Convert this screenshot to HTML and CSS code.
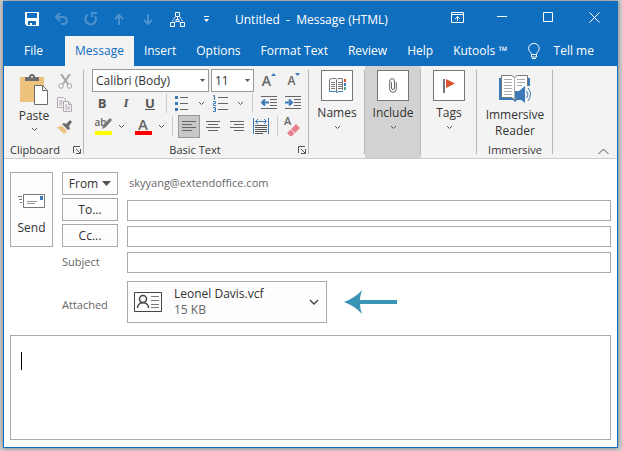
FILE: index.html
```html
<!DOCTYPE html>
<html lang="en">
<head>
<meta charset="UTF-8">
<meta name="viewport" content="width=device-width, initial-scale=1.0">
<title>Untitled - Message (HTML)</title>
<link rel="stylesheet" href="styles.css">
</head>
<body>
  <div class="window">
    <header class="titlebar">
      <div class="quick-access">
        <button type="button" aria-label="Save">
          <svg width="15" height="15" viewBox="0 0 15 15"><path fill="#fff" fill-rule="evenodd" d="M0 0h14v14H2l-2-2zM2 1v5h10V1zM3 9v4h2v-2h2v2h4V9z"/></svg>
        </button>
        <button type="button" class="faded" aria-label="Undo">
          <svg width="15" height="14" viewBox="0 0 15 14" class="line"><path stroke-width="2" d="M6 1L2 5l4 4M2 5h7c5 0 5 7 0 7H7"/></svg>
        </button>
        <button type="button" class="faded" aria-label="Redo">
          <svg width="14" height="14" viewBox="0 0 14 14" class="line"><path stroke-width="2" d="M4 2.500A5.300 5.300 0 1 0 11 4M8 5V1h5"/></svg>
        </button>
        <button type="button" class="faded" aria-label="Previous item">
          <svg width="11" height="13" viewBox="0 0 11 13" class="line"><path stroke-width="2" d="M5 12V2M1 6l4-4 4 4"/></svg>
        </button>
        <button type="button" class="faded" aria-label="Next item">
          <svg width="11" height="13" viewBox="0 0 11 13" class="line"><path stroke-width="2" d="M5 1v10M1 7l4 4 4-4"/></svg>
        </button>
        <button type="button" aria-label="Check names">
          <svg width="16" height="15" viewBox="0 0 16 15" class="line"><path d="M5.500.5h4v4h-4zM.5 10.500h4v4h-4zM10.500 10.500h4v4h-4zM6 7.500h3v2H6z"/><path stroke-dasharray="2 1" d="M5 5l-3 5M10 5l3 5M7.500 5v3M4 11l3-2M11 11L8 9"/></svg>
        </button>
        <button type="button" aria-label="Customize toolbar">
          <svg width="7" height="7" viewBox="0 0 7 7"><path fill="#fff" d="M1 0h5v1H1zM1 3h5L3.500 6z"/></svg>
        </button>
      </div>
      <div class="window-title">Untitled &nbsp;-&nbsp; Message (HTML)</div>
      <div class="window-controls">
        <button type="button" aria-label="Ribbon display options">
          <svg width="13" height="11" viewBox="0 0 13 11" class="line"><path d="M.5.5h12v10H.5zM0 2.500h13M6.500 9V4.500M4 7l2.500-2.500L9 7"/></svg>
        </button>
        <button type="button" aria-label="Minimize">
          <svg width="11" height="11" viewBox="0 0 11 11" class="line"><path d="M0 4.500h10"/></svg>
        </button>
        <button type="button" aria-label="Maximize">
          <svg width="10" height="10" viewBox="0 0 10 10" class="line"><path d="M.5.5h9v9h-9z"/></svg>
        </button>
        <button type="button" aria-label="Close">
          <svg width="11" height="11" viewBox="0 0 11 11" class="line"><path d="M.5.5l10 10M10.500.5l-10 10"/></svg>
        </button>
      </div>
    </header>

    <nav class="tabs">
      <a href="#file">File</a>
      <a href="#message" class="active">Message</a>
      <a href="#insert">Insert</a>
      <a href="#options">Options</a>
      <a href="#format">Format Text</a>
      <a href="#review">Review</a>
      <a href="#help">Help</a>
      <a href="#kutools">Kutools ™</a>
      <a href="#tellme" class="tell-me">
        <svg width="12" height="17" viewBox="0 0 12 17" class="line"><path d="M3.500 11.500C3.500 9 .6 8.500.6 5.500a5.200 5 0 0 1 10.600 0c0 3-2.700 3.500-2.700 6zM3.500 12v2h5v-2M4 15.500h4"/></svg>
        Tell me
      </a>
    </nav>

    <div class="ribbon">
      <section class="group clipboard">
        <div class="clipboard-tools">
          <button type="button" class="paste">
            <svg width="29" height="31" viewBox="0 0 29 31"><path fill="#ecc27c" d="M0 3h24v25H0z"/><path fill="#6d6d6d" d="M5 3h4a3 3 0 0 1 6 0h4v4H5z"/><circle cx="12" cy="3" r="1" fill="#f2f2f2"/><path fill="#fff" stroke="#6d6d6d" d="M14.500 11.500h8l5 5v14h-13z"/><path fill="none" stroke="#6d6d6d" d="M22.500 11.500v5h5"/></svg>
            <span>Paste</span>
            <svg class="chevron" width="7" height="5" viewBox="0 0 7 5"><path d="M1 1l2.500 2.500L6 1"/></svg>
          </button>
          <div class="clipboard-side">
            <button type="button" aria-label="Cut">
              <svg width="15" height="15" viewBox="0 0 15 15" fill="none" stroke="#a5a5a5"><path stroke-width="2" d="M3 0l7 10M12 0L5 10"/><circle cx="3" cy="12" r="2.300"/><circle cx="11.500" cy="12" r="2.300"/></svg>
            </button>
            <button type="button" aria-label="Copy">
              <svg width="16" height="15" viewBox="0 0 16 15" fill="#f5f2f5" stroke="#b3abb3"><path d="M.5.5h6l2 2v8h-8zM2 4h4M2 6h4M2 8h3"/><path d="M6.500 4.500h5l3 3v7h-8zM11.500 4.500v3h3M8 8h2M8 10h5M8 12h5"/></svg>
            </button>
            <button type="button" aria-label="Format painter">
              <svg width="16" height="14" viewBox="0 0 16 14"><path fill="#ecc27c" d="M0 7l5-1 5 5-3 3z"/><path fill="#6d6d6d" d="M5 4l2-1 2 1 4-4 2 2-3 4 1 3-2 1z"/></svg>
            </button>
          </div>
        </div>
        <div class="group-label">
          <span>Clipboard</span>
          <button type="button" class="launcher" aria-label="Clipboard settings">
            <svg width="8" height="8" viewBox="0 0 8 8"><path d="M.5 7V.5H7M3 3l4 4M7.500 3v4.500H3"/></svg>
          </button>
        </div>
      </section>

      <section class="group basic-text">
        <div class="text-row">
          <div class="picker font-picker">
            <select aria-label="Font"><option>Calibri (Body)</option></select>
            <svg width="5" height="3" viewBox="0 0 5 3"><path fill="#555" d="M0 0h5L2.500 3z"/></svg>
          </div>
          <div class="picker size-picker">
            <select aria-label="Font size"><option>11</option></select>
            <svg width="5" height="3" viewBox="0 0 5 3"><path fill="#555" d="M0 0h5L2.500 3z"/></svg>
          </div>
          <button type="button" class="grow" aria-label="Grow font">A<svg width="5" height="3" viewBox="0 0 5 3"><path fill="#3b79b7" d="M0 3h5L2.500 0z"/></svg></button>
          <button type="button" class="shrink" aria-label="Shrink font">A<svg width="5" height="3" viewBox="0 0 5 3"><path fill="#3b79b7" d="M0 0h5L2.500 3z"/></svg></button>
        </div>

        <div class="text-row style-row">
          <button type="button" class="letter bold">B</button>
          <button type="button" class="letter italic">I</button>
          <button type="button" class="letter underline">U</button>
          <i class="divider"></i>
          <button type="button" class="with-menu" aria-label="Bullets">
            <svg width="14" height="15" viewBox="0 0 14 15"><path fill="#3b79b7" d="M0 0h3v3H0zM0 6h3v3H0zM0 12h3v3H0z"/><path stroke="#666" d="M5 1.500h8M5 7.500h8M5 13.500h8"/></svg>
            <svg class="chevron" width="7" height="5" viewBox="0 0 7 5"><path d="M1 1l2.500 2.500L6 1"/></svg>
          </button>
          <button type="button" class="with-menu" aria-label="Numbering">
            <svg width="15" height="17" viewBox="0 0 15 17" fill="none"><path stroke="#3b79b7" d="M0 1l1.500-.5V5M0 6.500h2.500v2h-2v2H3M0 12.500h2.500v4H0M1 14.500h1"/><path stroke="#666" d="M5 2.500h10M5 8.500h10M5 14.500h10"/></svg>
            <svg class="chevron" width="7" height="5" viewBox="0 0 7 5"><path d="M1 1l2.500 2.500L6 1"/></svg>
          </button>
          <i class="divider"></i>
          <button type="button" aria-label="Decrease indent">
            <svg width="16" height="14" viewBox="0 0 16 14" fill="none"><path stroke="#666" d="M0 .5h16M9 3.500h7M9 6.500h7M9 9.500h7M0 12.500h16"/><path stroke="#3b79b7" stroke-width="2" d="M8 6.500H1M4 3.500l-3 3 3 3"/></svg>
          </button>
          <button type="button" aria-label="Increase indent">
            <svg width="16" height="14" viewBox="0 0 16 14" fill="none"><path stroke="#666" d="M0 .5h16M9 3.500h7M9 6.500h7M9 9.500h7M0 12.500h16"/><path stroke="#3b79b7" stroke-width="2" d="M0 6.500h7M4 3.500l3 3-3 3"/></svg>
          </button>
        </div>

        <div class="text-row color-row">
          <button type="button" class="with-menu" aria-label="Highlight color">
            <span class="swatch highlight">ab<svg width="11" height="12" viewBox="0 0 11 12"><path fill="#777" d="M9 0l2 2-6 7-4 2 1-4z"/></svg></span>
            <svg class="chevron" width="7" height="5" viewBox="0 0 7 5"><path d="M1 1l2.500 2.500L6 1"/></svg>
          </button>
          <button type="button" class="with-menu" aria-label="Font color">
            <span class="swatch font-color">A</span>
            <svg class="chevron" width="7" height="5" viewBox="0 0 7 5"><path d="M1 1l2.500 2.500L6 1"/></svg>
          </button>
          <i class="divider"></i>
          <div class="align-buttons">
            <button type="button" class="align pressed" aria-label="Align left" aria-pressed="true">
              <svg width="14" height="11" viewBox="0 0 14 11"><path stroke="#666" d="M0 .5h14M0 3.500h10M0 6.500h14M0 9.500h10"/></svg>
            </button>
            <button type="button" class="align" aria-label="Center">
              <svg width="14" height="11" viewBox="0 0 14 11"><path stroke="#666" d="M0 .5h14M2 3.500h10M0 6.500h14M2 9.500h10"/></svg>
            </button>
            <button type="button" class="align" aria-label="Align right">
              <svg width="14" height="11" viewBox="0 0 14 11"><path stroke="#666" d="M0 .5h14M4 3.500h10M0 6.500h14M4 9.500h10"/></svg>
            </button>
            <button type="button" class="align" aria-label="Justify">
              <svg width="16" height="16" viewBox="0 0 16 16" fill="none"><path stroke="#3b79b7" d="M.5 0v16M15.500 0v16M3 3.500h10M5 1L2.500 3.500 5 6M11 1l2.500 2.500L11 6"/><path stroke="#555" d="M2 7.500h12M2 9.500h12M2 11.500h12M2 13.500h12M2 15.500h8"/></svg>
            </button>
          </div>
          <i class="divider"></i>
          <button type="button" class="clear" aria-label="Clear formatting">
            <span>A</span>
            <svg width="14" height="12" viewBox="0 0 14 12"><path fill="#e8808f" d="M9 0l4 4-5 5-4-4zM3.500 5.500l4 4L5 12H3L0 9z"/></svg>
          </button>
        </div>

        <div class="group-label">
          <span>Basic Text</span>
          <button type="button" class="launcher" aria-label="Font settings">
            <svg width="8" height="8" viewBox="0 0 8 8"><path d="M.5 7V.5H7M3 3l4 4M7.500 3v4.500H3"/></svg>
          </button>
        </div>
      </section>

      <section class="group compact">
        <button type="button" class="large">
          <span class="frame"><svg width="17" height="15" viewBox="0 0 17 15" fill="none"><path fill="#fff" stroke="#3b79b7" d="M.5 2v11.500h6l1.500 1 1.500-1H14"/><path stroke="#777" d="M.5 12V1.500L3 .5h4l1 1 1-1h4.500V12M7.500 2v12M2 4.500h4M2 6.500h4M2 8.500h4M2 10.500h4M9 4.500h4M9 6.500h4M9 8.500h4M9 10.500h4"/><path fill="#d9542f" d="M15 1h2v3h-2z"/><path fill="#3b79b7" d="M15 5h2v3h-2z"/><path fill="#4ba68a" d="M15 9h2v3h-2z"/></svg></span>
          <span>Names</span>
          <svg class="chevron" width="7" height="5" viewBox="0 0 7 5"><path d="M1 1l2.500 2.500L6 1"/></svg>
        </button>
      </section>

      <section class="group compact selected">
        <button type="button" class="large">
          <span class="frame"><svg width="8" height="15" viewBox="0 0 8 15" fill="none" stroke="#666"><path d="M2.500 4v6a1.500 1.500 0 0 0 3 0V3A2.300 2.300 0 0 0 .7 3v8a3.300 3.300 0 0 0 6.600 0V4"/></svg></span>
          <span>Include</span>
          <svg class="chevron" width="7" height="5" viewBox="0 0 7 5"><path d="M1 1l2.500 2.500L6 1"/></svg>
        </button>
      </section>

      <section class="group compact">
        <button type="button" class="large">
          <span class="frame"><svg width="12" height="14" viewBox="0 0 12 14"><path fill="#777" d="M0 0h2v14H0z"/><path fill="#d9542f" d="M3 0l9 4.500L3 9z"/></svg></span>
          <span>Tags</span>
          <svg class="chevron" width="7" height="5" viewBox="0 0 7 5"><path d="M1 1l2.500 2.500L6 1"/></svg>
        </button>
      </section>

      <section class="group immersive">
        <button type="button" class="large">
          <svg width="33" height="29" viewBox="0 0 33 29" fill="none"><path fill="#3b79b7" d="M0 3h31v22H18l-2 2-2-2H0z"/><path fill="#fff" stroke="#777" d="M2.500.5h10l3 2 3-2h10v22h-10l-3 2-3-2h-10z"/><path stroke="#aaa" d="M15.500 2v22M5 4.500h8M5 7.500h8M5 10.500h8M5 13.500h8M5 16.500h8M5 19.500h8M18 4.500h8M18 7.500h8M18 10.500h5"/><path fill="#f3f3f3" d="M24 11h9v18h-9z"/><path fill="#3b79b7" d="M16 16h4l6-5v17l-6-5h-4z"/><path stroke="#3b79b7" d="M27.500 16q3 4 0 7M29 13q5 6 0 13"/></svg>
          <span>Immersive<br>Reader</span>
        </button>
        <div class="group-label">Immersive</div>
      </section>

      <button type="button" class="collapse" aria-label="Collapse ribbon">
        <svg class="chevron" width="11" height="7" viewBox="0 0 11 7"><path d="M.5 6l5-5 5 5"/></svg>
      </button>
    </div>

    <form class="compose">
      <button type="button" class="box-button send">
        <svg width="28" height="15" viewBox="0 0 28 15" fill="none"><path fill="#fff" stroke="#777" d="M5.500.5h21v13h-21z"/><path fill="#3b79b7" d="M22 2h3v4h-3z"/><path stroke="#999" d="M9 7.500h10M9 9.500h8"/><path stroke="#777" d="M0 2.500h4M1 5.500h3M2 8.500h2"/></svg>
        <span>Send</span>
      </button>
      <button type="button" class="box-button">From
        <svg width="9" height="5" viewBox="0 0 9 5"><path fill="#555" d="M0 0h9L4.500 5z"/></svg>
      </button>
      <span class="sender">skyyang@extendoffice.com</span>
      <button type="button" class="box-button">To...</button>
      <input type="text" aria-label="To">
      <button type="button" class="box-button">Cc...</button>
      <input type="text" aria-label="Cc">
      <label class="field-label" for="subject">Subject</label>
      <input type="text" id="subject">
      <span class="field-label attached-label">Attached</span>
      <div class="attachments">
        <button type="button" class="attachment">
          <svg width="28" height="20" viewBox="0 0 28 20" fill="none" stroke="#444"><path d="M.5.5h27v19H.5z"/><circle cx="9" cy="7" r="3.500" stroke-width="1.500"/><path stroke-width="1.500" d="M3.500 16c0-7 11-7 11 0"/><path stroke="#777" d="M17 4.500h8M17 8.500h8M17 12.500h8M17 15.500h8"/></svg>
          <span class="file"><span>Leonel Davis.vcf</span><span class="file-size">15 KB</span></span>
          <svg width="10" height="7" viewBox="0 0 10 7" fill="none" stroke="#444"><path stroke-width="1.500" d="M1 1l4 4 4-4"/></svg>
        </button>
        <svg width="53" height="24" viewBox="0 0 53 24"><path fill="#3a94b5" d="M0 12Q11 8 18 0q-2 6-2 10h37v4H16q0 4 2 10-7-8-18-12z"/></svg>
      </div>
    </form>

    <div class="message">
      <textarea aria-label="Message body"></textarea>
      <span class="caret"></span>
    </div>
  </div>
</body>
</html>
```

FILE: styles.css
```css
* {
  box-sizing: border-box;
}

body {
  margin: 0;
  padding: 1px 4px 3px 3px;
  min-height: 100vh;
  display: flex;
  background-color: #d0d0d0;
  font-family: "Open Sans", "Noto Sans", sans-serif;
  font-size: 12px;
  line-height: 16px;
  color: #333;
}

button,
input,
select,
textarea {
  font: inherit;
  color: inherit;
}

button {
  margin: 0;
  padding: 0;
  border: 0;
  background: none;
  display: flex;
  align-items: center;
  justify-content: center;
}

svg {
  display: block;
  flex: none;
}

.line {
  fill: none;
  stroke: #fff;
}

.chevron {
  fill: none;
  stroke: #555;
}

.window {
  flex: 1;
  display: flex;
  flex-direction: column;
  background-color: #fff;
  border: 1px solid #106ebe;
  box-shadow: 0 0 5px #777;
}

/* title bar and tabs */

.titlebar {
  display: flex;
  height: 34px;
  background-color: #106ebe;
  color: #fff;
}

.quick-access {
  display: flex;
  padding-left: 14px;
}

.quick-access button {
  width: 29px;
}

.quick-access .faded {
  opacity: 0.25;
}

.window-title {
  flex: 1;
  padding-left: 14px;
  line-height: 36px;
  white-space: nowrap;
}

.window-controls {
  display: flex;
  padding-bottom: 4px;
}

.window-controls button {
  width: 46px;
}

.window-controls button:first-child {
  width: 44px;
}

.tabs {
  display: flex;
  height: 30px;
  padding-left: 10px;
  background-color: #106ebe;
}

.tabs a {
  padding: 0 10px;
  line-height: 30px;
  color: #fff;
  text-decoration: none;
  white-space: nowrap;
}

.tabs a:first-child {
  padding-right: 22px;
}

.tabs .active {
  background-color: #f3f3f3;
  color: #106ebe;
}

.tabs .tell-me {
  display: flex;
  align-items: center;
  gap: 14px;
}

/* ribbon */

.ribbon {
  display: flex;
  height: 93px;
  background-color: #f3f3f3;
  border-bottom: 1px solid #ccc;
}

.group {
  position: relative;
  display: flex;
  flex-direction: column;
  padding-top: 4px;
}

.group::after {
  content: "";
  position: absolute;
  top: 4px;
  right: 0;
  bottom: 4px;
  width: 1px;
  background-color: #b5b5b5;
}

.group-label {
  display: flex;
  align-items: center;
  justify-content: center;
  margin-top: auto;
  font-size: 11px;
}

.launcher svg {
  fill: none;
  stroke: #555;
}

.clipboard {
  width: 80px;
}

.clipboard-tools {
  display: flex;
  align-items: flex-start;
  padding: 4px 0 0 14px;
  gap: 7px;
}

.paste {
  width: 32px;
  flex-direction: column;
  gap: 3px;
}

.clipboard-side {
  display: flex;
  flex-direction: column;
  gap: 8px;
}

.clipboard .group-label {
  justify-content: space-between;
  padding: 0 3px 0 6px;
}

.basic-text {
  width: 225px;
  padding: 3px 0 0 8px;
}

.basic-text .group-label span {
  flex: 1;
  text-align: center;
}

.basic-text .launcher {
  margin-right: 3px;
}

.text-row {
  display: flex;
  align-items: center;
  height: 23px;
}

.picker {
  position: relative;
  height: 23px;
  margin-right: 2px;
}

.picker select {
  appearance: none;
  width: 100%;
  height: 100%;
  padding: 0 3px;
  border: 1px solid #999;
  border-radius: 0;
  background-color: #fff;
}

.picker svg {
  position: absolute;
  top: 10px;
  right: 4px;
}

.font-picker {
  width: 117px;
}

.size-picker {
  width: 43px;
}

.grow,
.shrink {
  width: 26px;
  align-items: flex-start;
  color: #666;
  font-size: 14px;
  font-weight: 600;
}

.shrink {
  width: 24px;
  font-size: 12px;
}

.style-row {
  height: 22px;
  padding-left: 2px;
  gap: 8px;
}

.letter {
  width: 16px;
  font-size: 13px;
  font-weight: bold;
  color: #555;
}

.italic {
  font-family: "Liberation Serif", serif;
  font-style: italic;
}

.underline {
  text-decoration: underline;
}

.divider {
  width: 1px;
  height: 20px;
  background-color: #ccc;
}

.with-menu {
  gap: 9px;
}

.color-row {
  height: 24px;
  gap: 5px;
}

.color-row .with-menu {
  width: 35px;
  gap: 6px;
}

.swatch {
  position: relative;
  width: 17px;
  height: 18px;
  border-bottom: 4px solid #f00;
  font-size: 15px;
  line-height: 14px;
  font-weight: 600;
  color: #666;
}

.swatch.highlight {
  border-color: #ff0;
  font-size: 10px;
  line-height: 10px;
  text-align: left;
}

.swatch svg {
  position: absolute;
  right: 0;
  top: 1px;
}

.align-buttons {
  display: flex;
  gap: 2px;
}

.align {
  width: 22px;
  height: 23px;
}

.align.pressed {
  background-color: #c8c8c8;
  border: 1px solid #999;
}

.clear {
  position: relative;
  width: 22px;
  height: 20px;
  align-items: flex-end;
}

.clear span {
  position: absolute;
  top: -3px;
  left: 1px;
  font-size: 11px;
  font-weight: 600;
  color: #666;
}

.compact {
  width: 56px;
}

.compact.selected {
  background-color: #d2d2d2;
}

.large {
  flex-direction: column;
  gap: 4px;
}

.frame {
  display: flex;
  align-items: center;
  justify-content: center;
  width: 32px;
  height: 31px;
  background-color: #fff;
  border: 1px solid #777;
}

.immersive {
  width: 76px;
}

.immersive .large {
  padding-top: 5px;
  gap: 3px;
}

.collapse {
  margin-left: auto;
  padding: 0 8px 3px;
  align-items: flex-end;
}

/* address fields */

.compose {
  display: grid;
  grid-template-columns: 43px 56px 1fr;
  grid-template-rows: repeat(4, 23px) auto;
  gap: 3px 9px;
  padding: 13px 6px 12px;
}

.box-button {
  gap: 4px;
  background-color: #fdfdfd;
  border: 1px solid #aaa;
}

.send {
  grid-row: 1 / 4;
  flex-direction: column;
  padding-top: 10px;
  gap: 11px;
}

.sender {
  padding-left: 2px;
  line-height: 22px;
  font-size: 11px;
  color: #666;
}

.compose input {
  align-self: end;
  width: 100%;
  height: 21px;
  padding: 0 4px;
  border: 1px solid #aaa;
}

.field-label {
  grid-column: 2;
  align-self: center;
  font-size: 11px;
  color: #666;
}

.attached-label {
  padding-top: 10px;
}

.attachments {
  display: flex;
  align-items: center;
  gap: 17px;
  padding-top: 5px;
}

.attachment {
  width: 200px;
  height: 42px;
  padding: 0 7px 0 6px;
  gap: 12px;
  background-color: #fdfdfd;
  border: 1px solid #aaa;
}

.file {
  flex: 1;
  display: flex;
  flex-direction: column;
  text-align: left;
}

.file-size {
  color: #666;
}

.message {
  position: relative;
  flex: 1;
  display: flex;
  margin: 0 6px 7px;
}

.message textarea {
  flex: 1;
  min-height: 80px;
  padding: 16px 11px;
  border: 1px solid #aaa;
  resize: none;
  outline: none;
}

.caret {
  position: absolute;
  top: 17px;
  left: 11px;
  width: 1px;
  height: 18px;
  background-color: #000;
}
```
